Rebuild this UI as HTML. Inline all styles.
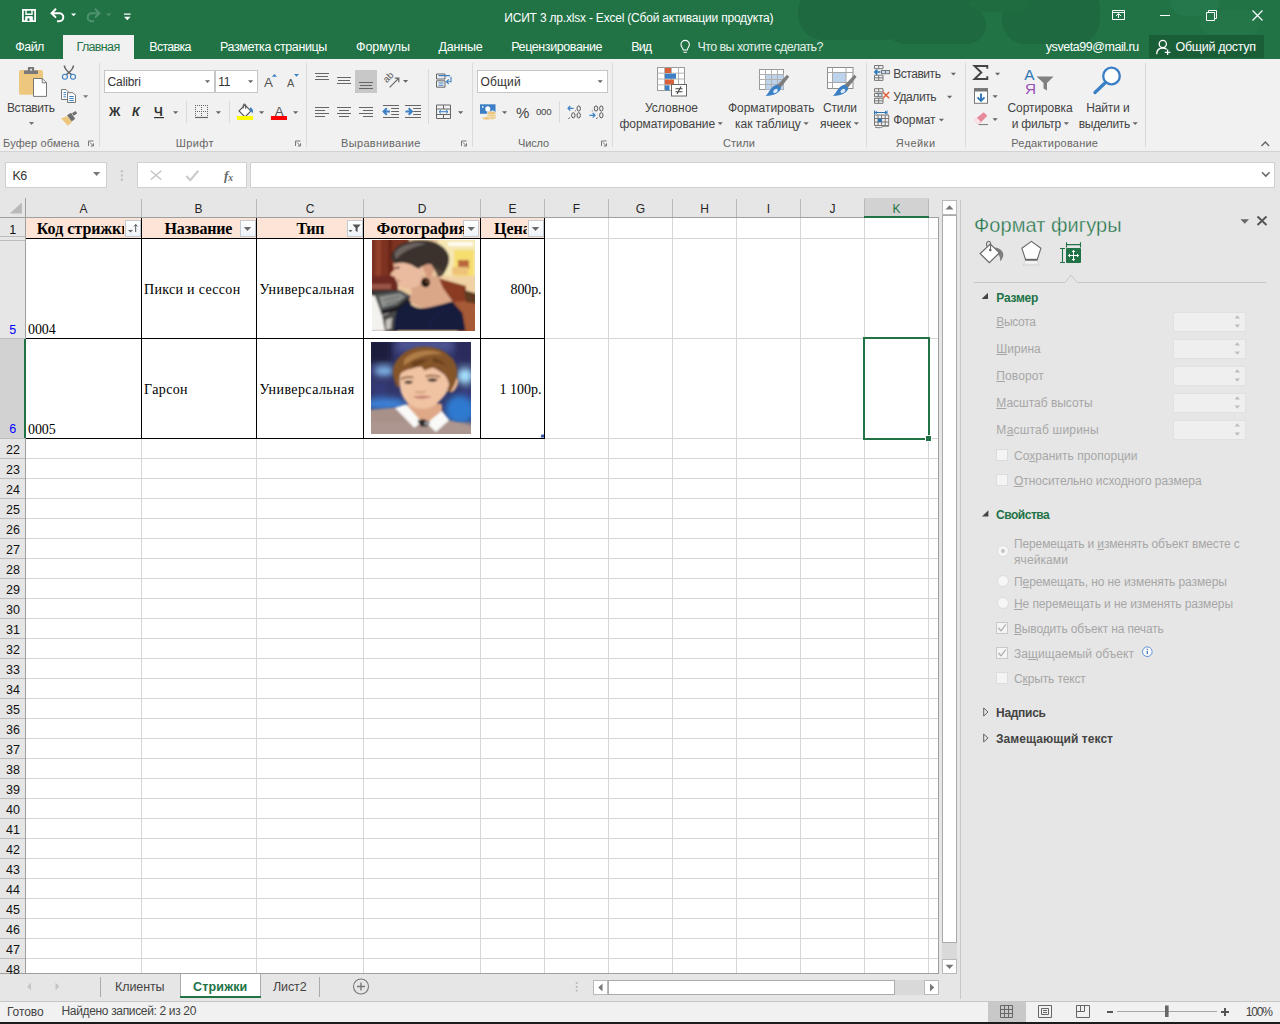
<!DOCTYPE html>
<html lang="ru"><head><meta charset="utf-8"><title>ИСИТ 3 лр.xlsx - Excel</title>
<style>
*{box-sizing:border-box;margin:0;padding:0}
html,body{width:1280px;height:1024px;overflow:hidden;background:#e6e6e6}
body{font-family:"Liberation Sans",sans-serif;font-size:12px;color:#444;position:relative}
.a{position:absolute}
.t{position:absolute;white-space:nowrap;line-height:normal}
.ov{position:absolute;left:0;top:0;pointer-events:none}
u{text-decoration-thickness:1px;text-underline-offset:1px}

</style></head><body>
<!-- title bar + tabs -->
<div class="a" style="left:0px;top:0px;width:1280px;height:59px;background:#217346;"></div>
<div class="a" style="left:790px;top:0;width:490px;height:59px;overflow:hidden"><div class="a" style="left:8px;top:-14px;width:112px;height:54px;border-radius:26px;background:#1e693f"></div><div class="a" style="left:96px;top:6px;width:100px;height:38px;border-radius:19px;background:#1e693f"></div><div class="a" style="left:60px;top:-20px;width:120px;height:40px;border-radius:19px;background:#1e693f"></div><div class="a" style="left:212px;top:-16px;width:98px;height:60px;border-radius:24px;background:#1e693f"></div><div class="a" style="left:180px;top:-20px;width:60px;height:32px;border-radius:12px;background:#1f6c41"></div><div class="a" style="left:380px;top:-14px;width:50px;height:30px;border-radius:15px;background:#25784b"></div><div class="a" style="left:410px;top:10px;width:60px;height:26px;border-radius:13px;background:#247649"></div></div>
<div class="a" style="left:63px;top:35px;width:71px;height:24px;background:#f1f1f1;"></div>
<div class="a" style="left:1149px;top:35px;width:115px;height:23px;background:#1a5e38;"></div>
<!-- ribbon -->
<div class="a" style="left:0px;top:59px;width:1280px;height:92px;background:#f1f1f1;"></div>
<div class="a" style="left:0px;top:151px;width:1280px;height:1px;background:#d2d2d2;"></div>
<div class="a" style="left:99px;top:63px;width:1px;height:84px;background:#dadada;"></div>
<div class="a" style="left:306px;top:63px;width:1px;height:84px;background:#dadada;"></div>
<div class="a" style="left:472px;top:63px;width:1px;height:84px;background:#dadada;"></div>
<div class="a" style="left:612px;top:63px;width:1px;height:84px;background:#dadada;"></div>
<div class="a" style="left:866px;top:63px;width:1px;height:84px;background:#dadada;"></div>
<div class="a" style="left:965px;top:63px;width:1px;height:84px;background:#dadada;"></div>
<div class="a" style="left:1145px;top:63px;width:1px;height:84px;background:#dadada;"></div>
<div class="a" style="left:186px;top:101px;width:1px;height:22px;background:#dadada;"></div>
<div class="a" style="left:229px;top:101px;width:1px;height:22px;background:#dadada;"></div>
<div class="a" style="left:428px;top:69px;width:1px;height:55px;background:#dadada;"></div>
<div class="a" style="left:559px;top:101px;width:1px;height:22px;background:#dadada;"></div>
<div class="a" style="left:104px;top:70px;width:111px;height:23px;background:#fff;border:1px solid #c6c6c6;"></div>
<div class="a" style="left:215px;top:70px;width:43px;height:23px;background:#fff;border:1px solid #c6c6c6;"></div>
<div class="a" style="left:477px;top:70px;width:131px;height:23px;background:#fff;border:1px solid #c6c6c6;"></div>
<div class="a" style="left:355px;top:70px;width:22px;height:23px;background:#c8c8c8;"></div>
<!-- formula bar -->
<div class="a" style="left:5px;top:162px;width:102px;height:26px;background:#fff;border:1px solid #d0d0d0;"></div>
<div class="a" style="left:137px;top:162px;width:110px;height:26px;background:#fff;border:1px solid #d0d0d0;"></div>
<div class="a" style="left:250px;top:162px;width:1025px;height:26px;background:#fff;border:1px solid #d0d0d0;"></div>
<!-- grid -->
<div class="a" style="left:26px;top:218px;width:913px;height:755px;background:#fff;"></div>
<div class="a" style="left:26px;top:218px;width:519px;height:20px;background:#fce4d6;"></div>
<div class="a" style="left:864px;top:198px;width:65px;height:19px;background:#d2d2d2;"></div>
<div class="a" style="left:0px;top:339px;width:25px;height:99px;background:#d2d2d2;"></div>
<div class="a" style="left:141px;top:218px;width:1px;height:755px;background:#d6d6d6;"></div>
<div class="a" style="left:141px;top:199px;width:1px;height:18px;background:#b9b9b9;"></div>
<div class="a" style="left:256px;top:218px;width:1px;height:755px;background:#d6d6d6;"></div>
<div class="a" style="left:256px;top:199px;width:1px;height:18px;background:#b9b9b9;"></div>
<div class="a" style="left:363px;top:218px;width:1px;height:755px;background:#d6d6d6;"></div>
<div class="a" style="left:363px;top:199px;width:1px;height:18px;background:#b9b9b9;"></div>
<div class="a" style="left:480px;top:218px;width:1px;height:755px;background:#d6d6d6;"></div>
<div class="a" style="left:480px;top:199px;width:1px;height:18px;background:#b9b9b9;"></div>
<div class="a" style="left:544px;top:218px;width:1px;height:755px;background:#d6d6d6;"></div>
<div class="a" style="left:544px;top:199px;width:1px;height:18px;background:#b9b9b9;"></div>
<div class="a" style="left:608px;top:218px;width:1px;height:755px;background:#d6d6d6;"></div>
<div class="a" style="left:608px;top:199px;width:1px;height:18px;background:#b9b9b9;"></div>
<div class="a" style="left:672px;top:218px;width:1px;height:755px;background:#d6d6d6;"></div>
<div class="a" style="left:672px;top:199px;width:1px;height:18px;background:#b9b9b9;"></div>
<div class="a" style="left:736px;top:218px;width:1px;height:755px;background:#d6d6d6;"></div>
<div class="a" style="left:736px;top:199px;width:1px;height:18px;background:#b9b9b9;"></div>
<div class="a" style="left:800px;top:218px;width:1px;height:755px;background:#d6d6d6;"></div>
<div class="a" style="left:800px;top:199px;width:1px;height:18px;background:#b9b9b9;"></div>
<div class="a" style="left:864px;top:218px;width:1px;height:755px;background:#d6d6d6;"></div>
<div class="a" style="left:864px;top:199px;width:1px;height:18px;background:#b9b9b9;"></div>
<div class="a" style="left:928px;top:218px;width:1px;height:755px;background:#d6d6d6;"></div>
<div class="a" style="left:928px;top:199px;width:1px;height:18px;background:#b9b9b9;"></div>
<div class="a" style="left:26px;top:238px;width:913px;height:1px;background:#d6d6d6;"></div>
<div class="a" style="left:26px;top:338px;width:913px;height:1px;background:#d6d6d6;"></div>
<div class="a" style="left:26px;top:438px;width:913px;height:1px;background:#d6d6d6;"></div>
<div class="a" style="left:26px;top:458px;width:913px;height:1px;background:#d6d6d6;"></div>
<div class="a" style="left:26px;top:478px;width:913px;height:1px;background:#d6d6d6;"></div>
<div class="a" style="left:26px;top:498px;width:913px;height:1px;background:#d6d6d6;"></div>
<div class="a" style="left:26px;top:518px;width:913px;height:1px;background:#d6d6d6;"></div>
<div class="a" style="left:26px;top:538px;width:913px;height:1px;background:#d6d6d6;"></div>
<div class="a" style="left:26px;top:558px;width:913px;height:1px;background:#d6d6d6;"></div>
<div class="a" style="left:26px;top:578px;width:913px;height:1px;background:#d6d6d6;"></div>
<div class="a" style="left:26px;top:598px;width:913px;height:1px;background:#d6d6d6;"></div>
<div class="a" style="left:26px;top:618px;width:913px;height:1px;background:#d6d6d6;"></div>
<div class="a" style="left:26px;top:638px;width:913px;height:1px;background:#d6d6d6;"></div>
<div class="a" style="left:26px;top:658px;width:913px;height:1px;background:#d6d6d6;"></div>
<div class="a" style="left:26px;top:678px;width:913px;height:1px;background:#d6d6d6;"></div>
<div class="a" style="left:26px;top:698px;width:913px;height:1px;background:#d6d6d6;"></div>
<div class="a" style="left:26px;top:718px;width:913px;height:1px;background:#d6d6d6;"></div>
<div class="a" style="left:26px;top:738px;width:913px;height:1px;background:#d6d6d6;"></div>
<div class="a" style="left:26px;top:758px;width:913px;height:1px;background:#d6d6d6;"></div>
<div class="a" style="left:26px;top:778px;width:913px;height:1px;background:#d6d6d6;"></div>
<div class="a" style="left:26px;top:798px;width:913px;height:1px;background:#d6d6d6;"></div>
<div class="a" style="left:26px;top:818px;width:913px;height:1px;background:#d6d6d6;"></div>
<div class="a" style="left:26px;top:838px;width:913px;height:1px;background:#d6d6d6;"></div>
<div class="a" style="left:26px;top:858px;width:913px;height:1px;background:#d6d6d6;"></div>
<div class="a" style="left:26px;top:878px;width:913px;height:1px;background:#d6d6d6;"></div>
<div class="a" style="left:26px;top:898px;width:913px;height:1px;background:#d6d6d6;"></div>
<div class="a" style="left:26px;top:918px;width:913px;height:1px;background:#d6d6d6;"></div>
<div class="a" style="left:26px;top:938px;width:913px;height:1px;background:#d6d6d6;"></div>
<div class="a" style="left:26px;top:958px;width:913px;height:1px;background:#d6d6d6;"></div>
<div class="a" style="left:0px;top:236px;width:25px;height:1px;background:#bdbdbd;"></div>
<div class="a" style="left:0px;top:240px;width:25px;height:1px;background:#bdbdbd;"></div>
<div class="a" style="left:0px;top:338px;width:25px;height:1px;background:#bdbdbd;"></div>
<div class="a" style="left:0px;top:438px;width:25px;height:1px;background:#bdbdbd;"></div>
<div class="a" style="left:0px;top:458px;width:25px;height:1px;background:#bdbdbd;"></div>
<div class="a" style="left:0px;top:478px;width:25px;height:1px;background:#bdbdbd;"></div>
<div class="a" style="left:0px;top:498px;width:25px;height:1px;background:#bdbdbd;"></div>
<div class="a" style="left:0px;top:518px;width:25px;height:1px;background:#bdbdbd;"></div>
<div class="a" style="left:0px;top:538px;width:25px;height:1px;background:#bdbdbd;"></div>
<div class="a" style="left:0px;top:558px;width:25px;height:1px;background:#bdbdbd;"></div>
<div class="a" style="left:0px;top:578px;width:25px;height:1px;background:#bdbdbd;"></div>
<div class="a" style="left:0px;top:598px;width:25px;height:1px;background:#bdbdbd;"></div>
<div class="a" style="left:0px;top:618px;width:25px;height:1px;background:#bdbdbd;"></div>
<div class="a" style="left:0px;top:638px;width:25px;height:1px;background:#bdbdbd;"></div>
<div class="a" style="left:0px;top:658px;width:25px;height:1px;background:#bdbdbd;"></div>
<div class="a" style="left:0px;top:678px;width:25px;height:1px;background:#bdbdbd;"></div>
<div class="a" style="left:0px;top:698px;width:25px;height:1px;background:#bdbdbd;"></div>
<div class="a" style="left:0px;top:718px;width:25px;height:1px;background:#bdbdbd;"></div>
<div class="a" style="left:0px;top:738px;width:25px;height:1px;background:#bdbdbd;"></div>
<div class="a" style="left:0px;top:758px;width:25px;height:1px;background:#bdbdbd;"></div>
<div class="a" style="left:0px;top:778px;width:25px;height:1px;background:#bdbdbd;"></div>
<div class="a" style="left:0px;top:798px;width:25px;height:1px;background:#bdbdbd;"></div>
<div class="a" style="left:0px;top:818px;width:25px;height:1px;background:#bdbdbd;"></div>
<div class="a" style="left:0px;top:838px;width:25px;height:1px;background:#bdbdbd;"></div>
<div class="a" style="left:0px;top:858px;width:25px;height:1px;background:#bdbdbd;"></div>
<div class="a" style="left:0px;top:878px;width:25px;height:1px;background:#bdbdbd;"></div>
<div class="a" style="left:0px;top:898px;width:25px;height:1px;background:#bdbdbd;"></div>
<div class="a" style="left:0px;top:918px;width:25px;height:1px;background:#bdbdbd;"></div>
<div class="a" style="left:0px;top:938px;width:25px;height:1px;background:#bdbdbd;"></div>
<div class="a" style="left:0px;top:958px;width:25px;height:1px;background:#bdbdbd;"></div>
<div class="a" style="left:0px;top:217px;width:939px;height:1px;background:#9f9f9f;"></div>
<div class="a" style="left:25px;top:198px;width:1px;height:775px;background:#9f9f9f;"></div>
<div class="a" style="left:938px;top:217px;width:1px;height:757px;background:#9f9f9f;"></div>
<div class="a" style="left:0px;top:973px;width:939px;height:1px;background:#9f9f9f;"></div>
<div class="a" style="left:26px;top:238px;width:519px;height:1px;background:#000;"></div>
<div class="a" style="left:26px;top:338px;width:519px;height:1px;background:#000;"></div>
<div class="a" style="left:26px;top:438px;width:519px;height:1px;background:#000;"></div>
<div class="a" style="left:141px;top:218px;width:1px;height:221px;background:#000;"></div>
<div class="a" style="left:256px;top:218px;width:1px;height:221px;background:#000;"></div>
<div class="a" style="left:363px;top:218px;width:1px;height:221px;background:#000;"></div>
<div class="a" style="left:480px;top:218px;width:1px;height:221px;background:#000;"></div>
<div class="a" style="left:544px;top:218px;width:1px;height:221px;background:#000;"></div>
<div class="a" style="left:864px;top:216px;width:65px;height:2px;background:#217346;"></div>
<div class="a" style="left:24px;top:339px;width:2px;height:99px;background:#217346;"></div>
<div class="a" style="left:863px;top:337px;width:67px;height:103px;border:1px solid #217346;border-width:2px;"></div>
<div class="a" style="left:925px;top:435px;width:7px;height:7px;background:#217346;border:1px solid #fff;"></div>
<div class="a" style="left:124.5px;top:220px;width:16px;height:16.5px;background:#f8fafc;border:1px solid #c3cad2;background:linear-gradient(#fff,#eef2f7);"></div>
<div class="a" style="left:239.5px;top:220px;width:16px;height:16.5px;background:#f8fafc;border:1px solid #c3cad2;background:linear-gradient(#fff,#eef2f7);"></div>
<div class="a" style="left:346.5px;top:220px;width:16px;height:16.5px;background:#f8fafc;border:1px solid #c3cad2;background:linear-gradient(#fff,#eef2f7);"></div>
<div class="a" style="left:463.2px;top:220px;width:16px;height:16.5px;background:#f8fafc;border:1px solid #c3cad2;background:linear-gradient(#fff,#eef2f7);"></div>
<div class="a" style="left:527.5px;top:220px;width:16px;height:16.5px;background:#f8fafc;border:1px solid #c3cad2;background:linear-gradient(#fff,#eef2f7);"></div>
<!-- scrollbars -->
<div class="a" style="left:942px;top:200px;width:15px;height:774px;background:#d9d9d9;"></div>
<div class="a" style="left:942px;top:200px;width:15px;height:15px;background:#fff;border:1px solid #b9b9b9;"></div>
<div class="a" style="left:942px;top:215px;width:15px;height:728px;background:#fff;border:1px solid #ababab;"></div>
<div class="a" style="left:942px;top:959px;width:15px;height:15px;background:#fff;border:1px solid #b9b9b9;"></div>
<div class="a" style="left:593px;top:980px;width:346px;height:15px;background:#d9d9d9;"></div>
<div class="a" style="left:593px;top:980px;width:15px;height:15px;background:#fff;border:1px solid #b9b9b9;"></div>
<div class="a" style="left:608px;top:980px;width:287px;height:15px;background:#fff;border:1px solid #ababab;"></div>
<div class="a" style="left:924px;top:980px;width:15px;height:15px;background:#fff;border:1px solid #b9b9b9;"></div>
<!-- sheet tabs -->
<div class="a" style="left:180px;top:974px;width:81px;height:23px;background:#fff;"></div>
<div class="a" style="left:180px;top:974px;width:1px;height:23px;background:#ababab;"></div>
<div class="a" style="left:260px;top:974px;width:1px;height:23px;background:#ababab;"></div>
<div class="a" style="left:180px;top:996px;width:81px;height:2px;background:#217346;"></div>
<div class="a" style="left:100px;top:977px;width:1px;height:20px;background:#ababab;"></div>
<div class="a" style="left:319px;top:977px;width:1px;height:20px;background:#ababab;"></div>
<!-- pane -->
<div class="a" style="left:960px;top:200px;width:1px;height:799px;background:#c8c8c8;"></div>
<div class="a" style="left:1173px;top:311.5px;width:73px;height:20px;background:#efefef;border:1px solid #e1e1e1;"></div>
<div class="a" style="left:1173px;top:338.5px;width:73px;height:20px;background:#efefef;border:1px solid #e1e1e1;"></div>
<div class="a" style="left:1173px;top:365.5px;width:73px;height:20px;background:#efefef;border:1px solid #e1e1e1;"></div>
<div class="a" style="left:1173px;top:392.5px;width:73px;height:20px;background:#efefef;border:1px solid #e1e1e1;"></div>
<div class="a" style="left:1173px;top:419.5px;width:73px;height:20px;background:#efefef;border:1px solid #e1e1e1;"></div>
<div class="a" style="left:996px;top:449px;width:12px;height:12px;background:#f4f4f4;border:1px solid #dcdcdc;"></div>
<div class="a" style="left:996px;top:474px;width:12px;height:12px;background:#f4f4f4;border:1px solid #dcdcdc;"></div>
<div class="a" style="left:996px;top:672px;width:12px;height:12px;background:#f4f4f4;border:1px solid #dcdcdc;"></div>
<div class="a" style="left:996px;top:622px;width:12px;height:12px;background:#f4f4f4;border:1px solid #c9c9c9;"></div>
<div class="a" style="left:996px;top:647px;width:12px;height:12px;background:#f4f4f4;border:1px solid #c9c9c9;"></div>
<div class="a" style="left:997px;top:545px;width:12px;height:12px;background:#f6f6f6;border:1px solid #dcdcdc;border-radius:50%;"></div>
<div class="a" style="left:997px;top:575px;width:12px;height:12px;background:#f6f6f6;border:1px solid #dcdcdc;border-radius:50%;"></div>
<div class="a" style="left:997px;top:597px;width:12px;height:12px;background:#f6f6f6;border:1px solid #dcdcdc;border-radius:50%;"></div>
<div class="a" style="left:1001px;top:549px;width:4px;height:4px;background:#c4c4c4;border-radius:50%;"></div>
<!-- status bar -->
<div class="a" style="left:0px;top:1001px;width:1280px;height:1px;background:#c6c6c6;"></div>
<div class="a" style="left:0px;top:1002px;width:1280px;height:20px;background:#f1f1f1;"></div>
<div class="a" style="left:988px;top:1002px;width:38px;height:20px;background:#c8c8c8;"></div>
<div class="a" style="left:0px;top:1022px;width:1280px;height:2px;background:#1c1c1c;"></div>
<svg class="a" style="left:372px;top:240px" width="103" height="91" viewBox="0 0 103 91">
<defs><filter id="b1" x="-10%" y="-10%" width="120%" height="120%"><feGaussianBlur stdDeviation="0.9"/></filter><clipPath id="c1"><rect width="103" height="91"/></clipPath></defs>
<g clip-path="url(#c1)"><g filter="url(#b1)">
<rect x="-3" y="-3" width="109" height="97" fill="#e9c9a0"/>
<rect x="-3" y="-3" width="40" height="42" fill="#7d3122"/><rect x="4" y="-3" width="5" height="42" fill="#93402a"/><rect x="16" y="-3" width="4" height="42" fill="#6a2619"/>
<rect x="66" y="-3" width="40" height="44" fill="#f6e7b4"/><rect x="82" y="10" width="20" height="27" fill="#f6df6e"/><rect x="76" y="2" width="25" height="4" fill="#fffdf2"/><rect x="86" y="20" width="11" height="9" fill="#b9683e"/><rect x="80" y="27" width="16" height="8" fill="#efc27a"/>
<path d="M66 36h40v26h-40z" fill="#f1d2a4"/>
<path d="M-3 36h24l5 5v10h-29z" fill="#6e2a21"/><path d="M-3 44h22v5h-25z" fill="#9a5446"/>
<path d="M66 38l28 8v32l-28-8z" fill="#8a3a20"/><path d="M82 62l24-2v34h-20z" fill="#a65a34"/><path d="M92 50l14 4v10l-12-2z" fill="#5e3a24"/>
<path d="M-3 50h30l12 6v8l-14 28h-28z" fill="#3a3433"/>
<path d="M-3 55l6 1l5.500 15l13.500 4l2 16h-27z" fill="#f4f2ee"/>
<path d="M3 54l26-3.500l9 5.500l-12 10l-17.500 5z" fill="#4d5152"/><path d="M7 56.500l21-3.200l5 3.200l-9 7l-14 4z" fill="#8e918d"/><path d="M12 60l16-3.500M14 64l12-3.500" stroke="#5a5d5c" stroke-width="1.200" fill="none"/>
<path d="M8.500 71l17.500-5l12-10v3.500l-11 10.500l-17.500 5z" fill="#1e1e21"/>
<path d="M10 75.500l17-5l-3 20.500h-11z" fill="#4a4949"/><path d="M13.500 80l6.500-2.500l-1 11l-5 1.500z" fill="#c4c0ba"/>
<path d="M66 36l5 12l10 14l-22 9l-16-6l-6-5l3-8l-3-8l8-8z" fill="#dba789"/>
<path d="M21.800 22c-1 3 1 5 1 7c-1 2-4.300 4-4.300 5.500c0 1.500 3 1.500 4.400 2.500c.5 2 1 3 2 4c-.5 2 1.500 4 4 5.300c3 1.500 6 2.500 8.300 2c4-.5 7-1.500 8.200-2c3-2 4-5 4.200-8l4-14l-20-6z" fill="#ebbb9f"/>
<path d="M24 27.500l4-.8M25.500 41l3-.3" stroke="#a56a55" stroke-width="1" fill="none"/>
<path d="M50.500 25.800c3-3 9-3 11.300 0c0 5-1 10-4.100 12.200c-3-.5-5.500-4-7.200-12.200z" fill="#d69c80"/>
<path d="M18.800 18.600c.5-3 1.500-6 3-8.200c3-4 6-6 10.200-7.200c6-2.500 12-3.500 17.500-3.100c6 .2 11 1 15.400 3.100c4 2 7 4 9.200 7.200c2 3 3 5 3.100 8.200c0 3-.5 6-2.100 9.200c-1.500 3-3 6-5.100 8.200l-4.100 1c-1-3-2.500-6-4.100-8.200l-2-4.100c-2-1-4-1-6.200 0c-1.500.5-3 1.200-4.100 2.100l-3.100 2c-2.500-1.500-5-3-7.100-4.100c-3-1-5.500-1.700-8.300-2c-3-.2-5.500 0-8.100 1c-1.200-.8-2-2-2.100-3.100z" fill="#3b312e"/>
<path d="M22.500 13c3-5 10-8.500 18-9.800c5-.8 10-.5 14 .5c-6 1-12 3-18 6c-5 2.500-9 5.500-12.500 9.500c-1-2-1.500-4-1.500-6.200z" fill="#6d645f"/>
<path d="M60 25c3 3 5 7 6 12c2-1 4-3 5-5z" fill="#55443c"/>
<ellipse cx="53.600" cy="42.500" rx="4.400" ry="4.800" fill="#15100f"/><ellipse cx="54.800" cy="41.600" rx="1.300" ry="2" fill="#7d4e34"/><ellipse cx="25.200" cy="28" rx="2" ry=".900" fill="#4a332c"/>
<path d="M36.200 61.600c2 3 5 5 9.200 6.200c5 .8 10 .2 14.400-1c7-1.500 14-3.500 20.500-5.200l10.200 11.300l3.100 18.100h-71.800c.3-6 1-12 2.100-18.100c1.500-3 3-4.500 5.100-6.100c2-2 4.500-3.500 7.200-5.200z" fill="#181b3b"/><path d="M56 91c2-9 8-17 16-22" stroke="#23285a" stroke-width="1" fill="none"/>
</g></g></svg>
<svg class="a" style="left:371px;top:342px" width="100" height="92" viewBox="0 0 100 92">
<defs><filter id="b2" x="-10%" y="-10%" width="120%" height="120%"><feGaussianBlur stdDeviation="0.8"/></filter><filter id="b3" x="-30%" y="-30%" width="160%" height="160%"><feGaussianBlur stdDeviation="3"/></filter><clipPath id="c2"><rect width="100" height="92"/></clipPath></defs>
<g clip-path="url(#c2)">
<rect width="100" height="92" fill="#33366a"/>
<g filter="url(#b3)"><rect x="-5" y="-5" width="26" height="26" fill="#1b1b3e"/><rect x="26" y="-4" width="56" height="14" fill="#4c5290"/><rect x="84" y="-4" width="20" height="24" fill="#2a2b5c"/><ellipse cx="13" cy="29" rx="10" ry="4.500" fill="#86bdf0"/><ellipse cx="8" cy="47" rx="7" ry="6" fill="#343a7a"/><ellipse cx="14" cy="62" rx="22" ry="6.500" fill="#3c80d6"/><ellipse cx="94" cy="34" rx="8" ry="8" fill="#a4e0fb"/><ellipse cx="89" cy="68" rx="15" ry="15" fill="#2e7ad0"/><ellipse cx="96" cy="51" rx="5" ry="6" fill="#393e84"/></g>
<g filter="url(#b2)">
<path d="M-3 68l27-2.200l30 12l24 .300l25 6.500v12h-106z" fill="#a9918a"/><path d="M-3 80h106v14h-106z" fill="#b09a92" opacity=".6"/>
<path d="M37 58l34 4v8l-14 14h-8l-13-16z" fill="#dfa988"/>
<path d="M28.500 41.200c-.500-5 0-9 1.500-12.300c4-3 8-4 10.300-4.100c4-1.500 7-2 10.200-2.100c4 .5 8 1.500 12.300 3.100c4 2 8 4.500 11.300 7.200c2 3 3.500 6 4.100 9.200c-.3 2.500-1 5-2.100 7.200c-1.300 2.500-3 5-5.100 7.200c-2.500 2.800-5 5-8.200 7.100c-3 1.800-6.500 2.800-10.200 3.100c-3-.1-5.600-.4-8.200-1c-3.500-1.500-6.500-3.500-9.300-6.200c-2-2.800-3.800-5.800-5.100-9.200c-.8-3-1.300-6-1.500-9.200z" fill="#f0c3a3"/>
<path d="M81.300 37.100c2-1.500 4.500-1.500 6.100 0c.3 4-1.500 9-5 12.500l-3.200.8z" fill="#e5b391"/>
<path d="M26.900 46.300c-2-3.500-3.800-7.500-4.600-12.300c-.5-3.500-.3-7 .5-10.200c1.500-4 4-7.500 7.200-10.300c3.500-3 7.500-5.500 12.300-7.200c4-1.200 8.500-1.700 13.300-1.500c5.500.5 10.500 1.700 15.400 3.600c4 2.200 7.500 5 10.300 8.200c2.300 3 3.800 6.500 4.600 10.200c.3 3.500.1 7-.5 10.300c-1.500 4.700-3.500 9-6.200 13.300l-3.100-1c1-2.500 1.700-5 2.100-7.200c-.6-3.200-2.100-6.200-4.100-9.200c-3.300-2.700-7.300-5.200-11.300-7.200c-3.300.3-6.300 1.300-9.300 2.600c-1-1.300-2-2.600-3-3.600c-3.200.1-6.200.6-10.200 2.100c-2.300.1-6.300 1.100-10.300 4.100c-1.500 3.300-2 7.300-1.500 12.300z" fill="#85552b"/>
<path d="M33 18c5-6 14-9.500 24-9.500c6 0 11 1.500 15 4c-6-1-12-.5-18 1c-8 2-15 5.500-21 10z" fill="#b07e46"/><path d="M40 21c5-2.500 11-4 17-3.500c-4 3-9 5.500-15 7.500zM62 16c6 1 11 4 14 8c-4-2-9-3.500-14-4z" fill="#68401e"/>
<path d="M33 40.200c3-1.800 6.500-1.800 9.300-.2c-2.800 2.300-6.500 2.300-9.300.2zM56 38c3.300-1.900 7.700-1.900 11 0c-3.300 2.300-7.700 2.300-11 0z" fill="#30221c"/><path d="M30 37c4-2 8.500-2.300 12.300-1.500M54.600 34.500c4.500-1.500 9.500-1.300 14.400.5" stroke="#76492a" stroke-width="1.400" fill="none"/>
<path d="M41.300 54.800c6-1.300 13-1.300 19.500-.3c-6 2.800-13.500 2.800-19.500.3z" fill="#c47e72"/><path d="M44.400 49.400c3 1.300 7 1.300 10.200 0" stroke="#cc9678" stroke-width="1.600" fill="none"/>
<path d="M23.900 65.800l11.200-3.600l15.400 17.900l-7.200 5.700z" fill="#f9f9f7"/><path d="M71 68.900l7.200 9.200l-13.300 11.800l-9.300-8.700z" fill="#f9f9f7"/>
<path d="M46.400 78.500l6-1.500l6.300 3l-2 4.500l-7 0z" fill="#29292b"/><circle cx="55.500" cy="81.200" r="2" fill="#a0a0a0"/>
</g></g></svg>

<svg class="ov" width="1280" height="1024" viewBox="0 0 1280 1024">
<!-- quick access toolbar -->
<g fill="none" stroke="#fff" stroke-width="1.5">
<path d="M22.900 9.900h12.200v11.300h-12.200z" stroke-width="1.800"/><path d="M26 10v4.200h6V10" stroke-width="1.400"/><path d="M25.700 21v-4.300h6.600V21z" fill="#fff" stroke-width="1"/><path d="M27.500 18.300v2.700h2v-2.700z" fill="#217346" stroke="none"/>
<path d="M56 8.8L51.6 13.2L56 17.6M52 13.2h7.3a4 4 0 0 1 0 8H57" stroke-width="2"/>
<path d="M95 8.8l4.4 4.4L95 17.6M99 13.2h-7.3a4 4 0 0 0 0 8H94" stroke="#4f9270" stroke-width="2"/>
</g>
<path transform="translate(71 13.4)" d="M0 0h5.2l-2.6 2.8z" fill="#fff"/><path transform="translate(106 13.4)" d="M0 0h5.2l-2.6 2.8z" fill="#4f9270"/>
<path d="M124 13.4h6.6v1.3H124zM124 16.8h6.6l-3.3 3.5z" fill="#fff"/>
<!-- window buttons -->
<g fill="none" stroke="#fff" stroke-width="1">
<path d="M1112.5 10.5h12v9h-12zM1112.5 12.5h12M1118.5 18v-4M1116 16l2.5-2.5l2.5 2.5"/>
<path d="M1160 15.5h10"/>
<path d="M1206.5 12.5h8v8h-8zM1208.5 12.5v-2h8v8h-2"/>
<path d="M1252.5 10.5l10 10M1262.5 10.5l-10 10" stroke-width="1.2"/>
<!-- bulb -->
<path d="M683.2 50c0-2-2.2-2.700-2.200-5.400a4.200 4.200 0 0 1 8.400 0c0 2.700-2.200 3.400-2.200 5.400zM683.500 52.300h3.400" stroke-width="1.100"/>
<!-- share person -->
<circle cx="1162.800" cy="44" r="3.600" stroke-width="1.300"/><path d="M1156.700 54.300c0-4 2.600-6.300 6.100-6.300c1.500 0 2.800.4 3.800 1.200M1167.600 49.500v5.600M1164.800 52.300h5.600" stroke-width="1.300"/>
</g>
<!-- ribbon: clipboard group -->
<rect x="19" y="70" width="24" height="24.800" rx="1.800" fill="#eec77e"/>
<path d="M24 70.500h14v3.600H24zM27.900 67h6.200v3.600h-6.200z" fill="#797979"/><circle cx="31" cy="69.800" r="1" fill="#f1f1f1"/>
<path d="M33.500 78.500h8.800l4.200 4.200v13.700h-13z" fill="#fff" stroke="#777" stroke-width="1"/><path d="M42.200 78.500v4.300h4.300" fill="none" stroke="#777" stroke-width="1"/>
<path transform="translate(28.900 122.100)" d="M0 0h5.2l-2.6 2.8z" fill="#777"/>
<path d="M64.300 65.500c.5 4 3.500 6.500 7.300 9.200M73.500 65.500c-.5 4-3.500 6.500-7.300 9.200" fill="none" stroke="#666" stroke-width="1.600"/>
<circle cx="64.900" cy="76.800" r="2.500" fill="none" stroke="#3b7fc4" stroke-width="1.100"/><circle cx="73" cy="76.800" r="2.500" fill="none" stroke="#3b7fc4" stroke-width="1.100"/>
<path d="M61.500 89.500h4.500l2 2v8h-6.500z" fill="#fff" stroke="#777"/><path d="M67.500 92.700h5.500l2.500 2.500v7.300h-8z" fill="#fff" stroke="#777"/>
<path d="M63.500 92.500h2.500M63.500 94.700h2.500M63.500 96.900h2.500M69.300 96.500h4.500M69.300 98.600h4.500M69.300 100.600h4.500" stroke="#3b7fc4" stroke-width="1"/>
<path transform="translate(83 95.300)" d="M0 0h5.2l-2.6 2.8z" fill="#777"/>
<path d="M61 118.500l6-2.500l5 6l-4 3.800z" fill="#eec77e"/><path d="M67 115.300l4-2.600l4.200 6l-3.500 2.800z" fill="#6e6e6e"/><path d="M72 113.300l3.500-2.300l1.700 2.200l-3.400 2.600z" fill="#6e6e6e"/>
<path transform="translate(88.500 140.500)" d="M0 5.5V0.5H5M5 5.5L1.5 2M5 5.5V2.8M5 5.5H2.3" fill="none" stroke="#777" stroke-width="1"/><path transform="translate(295.500 140.500)" d="M0 5.5V0.5H5M5 5.5L1.5 2M5 5.5V2.8M5 5.5H2.3" fill="none" stroke="#777" stroke-width="1"/><path transform="translate(461.500 140.500)" d="M0 5.5V0.5H5M5 5.5L1.5 2M5 5.5V2.8M5 5.5H2.3" fill="none" stroke="#777" stroke-width="1"/><path transform="translate(601.500 140.500)" d="M0 5.5V0.5H5M5 5.5L1.5 2M5 5.5V2.8M5 5.5H2.3" fill="none" stroke="#777" stroke-width="1"/>
<!-- font group -->
<path transform="translate(204.900 80.200)" d="M0 0h5.2l-2.6 2.8z" fill="#666"/><path transform="translate(248 80.200)" d="M0 0h5.2l-2.6 2.8z" fill="#666"/>
<path d="M271.900 76.800h5.100l-2.550-2.800z" fill="#3b7fc4"/><path d="M294 74h5l-2.500 2.800z" fill="#3b7fc4"/>
<path d="M154 117.600h10" stroke="#333" stroke-width="1.200"/>
<path transform="translate(173 111.300)" d="M0 0h5.2l-2.6 2.8z" fill="#666"/><path transform="translate(215.800 111.300)" d="M0 0h5.2l-2.6 2.8z" fill="#666"/><path transform="translate(259 111.300)" d="M0 0h5.2l-2.6 2.8z" fill="#666"/><path transform="translate(293 111.300)" d="M0 0h5.2l-2.6 2.8z" fill="#666"/>
<path d="M195 105.500h13M195 111.500h13M195.500 105v12M201.500 105v12M207.500 105v12" fill="none" stroke="#666" stroke-width="1" stroke-dasharray="1 1"/>
<path d="M195 117.500h13" stroke="#666" stroke-width="1.200"/>
<path d="M244.800 105l6.200 6l-6 6l-6-6z" fill="#fff" stroke="#555" stroke-width="1.100"/><path d="M243.200 108.500v-3.300a1.200 1.200 0 0 1 2.400 0v3.500" fill="none" stroke="#555" stroke-width="1"/>
<path d="M250.300 107.300c2.500 1 3.300 3.500 2.300 6.200c-.8-1.600-1.700-2.600-3.100-3.500z" fill="#3b7fc4"/>
<rect x="236.900" y="116" width="16.200" height="4" fill="#ffff00"/><rect x="270.900" y="116" width="16.100" height="4" fill="#ff0000"/>
<!-- alignment group -->
<g stroke="#666" stroke-width="1" fill="none">
<path d="M315 73.500h14M316 76.500h12M315 79.500h14M337 77.500h14M338 80.500h12M337 83.500h14M359 82.500h14M360 85.500h12M359 88.500h14"/>
<path d="M315 107.500h14M315 110.500h10M315 113.500h14M315 116.500h10M337 107.500h14M339 110.500h10M337 113.500h14M339 116.500h10M359 107.500h14M363 110.500h10M359 113.500h14M363 116.500h10"/>
<path d="M383 105.500h16M391.200 108.500h7.800M391.200 111.500h7.800M391.200 114.500h7.800M383 117.500h16M405 105.500h16M413.200 108.500h7.800M413.200 111.500h7.800M413.200 114.500h7.800M405 117.500h16"/>
<path d="M389.600 87.400l9-9M394.800 78.200h4v4" stroke-width="1.200"/>
<path d="M436.500 74h8.500v5h-8.500zM436.500 80.800h8.500v6.400h-8.500z"/>
<path d="M436.500 105h14v13.500h-14zM436.500 109h14M436.500 114.500h14M443.500 105v4M443.500 114.500v4"/>
</g>
<text transform="translate(386.800 83.300) rotate(-45)" font-family="Liberation Sans,sans-serif" font-size="9.500" fill="#555">ab</text>
<path transform="translate(403 80)" d="M0 0h5.2l-2.6 2.8z" fill="#666"/><path transform="translate(458 111.300)" d="M0 0h5.2l-2.6 2.8z" fill="#666"/>
<g stroke="#3b7fc4" stroke-width="2" fill="none">
<path d="M384 111.500h6M386.800 108.300l-3.200 3.200l3.200 3.200M405.500 111.500h6M408.700 108.300l3.200 3.200l-3.200 3.200"/>
<path d="M451 76.800v5h-4M448.800 79.500l-2.400 2.300l2.400 2.300M438.500 75.600h11.500M438.500 83h5M438.500 85.200h5" stroke-width="1.100"/>
<path d="M439 111.700h9M441 109.900l-2 1.800l2 1.800M446 109.900l2 1.800l-2 1.800" stroke-width="1"/>
</g>
<!-- number group -->
<path transform="translate(597.600 80.200)" d="M0 0h5.2l-2.6 2.8z" fill="#666"/><path transform="translate(502 111.300)" d="M0 0h5.2l-2.6 2.8z" fill="#666"/>
<rect x="480" y="104.300" width="15.500" height="9.500" fill="#3b7fc4"/><ellipse cx="487.800" cy="109" rx="2.500" ry="2.800" fill="#fff"/><rect x="482" y="106.200" width="1.500" height="1.500" fill="#fff"/><rect x="492" y="110.500" width="1.500" height="1.500" fill="#fff"/>
<g fill="#eec77e" stroke="#f1f1f1" stroke-width=".6"><ellipse cx="491.500" cy="117.500" rx="4.500" ry="1.900"/><ellipse cx="491.500" cy="115.300" rx="4.500" ry="1.900"/><ellipse cx="491.500" cy="113.100" rx="4.500" ry="1.900"/><ellipse cx="486.500" cy="118.300" rx="4" ry="1.700"/></g>
<g fill="none" stroke="#555" stroke-width="1"><ellipse cx="578.700" cy="108.500" rx="1.700" ry="2.600"/><ellipse cx="573.300" cy="115.300" rx="1.700" ry="2.600"/><ellipse cx="578.700" cy="115.300" rx="1.700" ry="2.600"/>
<ellipse cx="596" cy="108.500" rx="1.700" ry="2.600"/><ellipse cx="601.300" cy="108.500" rx="1.700" ry="2.600"/><ellipse cx="601.300" cy="115.300" rx="1.700" ry="2.600"/>
<path d="M575.500 110.500v.8M569.500 117.500l-.8 1.500M592.300 110.500v.8M597.300 117.500l-.8 1.500"/></g>
<g stroke="#3b7fc4" stroke-width="1.200" fill="none"><path d="M568 108.300h5.500M570.300 106l-2.300 2.300l2.300 2.300M589.500 115.300h5.500M592.700 113l2.300 2.300l-2.300 2.300"/></g>
<!-- styles group -->
<path transform="translate(717.600 122.300)" d="M0 0h5.2l-2.6 2.8z" fill="#666"/><path transform="translate(803.500 122.300)" d="M0 0h5.2l-2.6 2.8z" fill="#666"/><path transform="translate(853.800 122.300)" d="M0 0h5.2l-2.6 2.8z" fill="#666"/>
<g>
<rect x="657.500" y="67.500" width="27" height="23" fill="#fff" stroke="#9a9a9a"/><path d="M664.500 67.500v23M671.500 67.500v23M678.500 67.500v23M657.500 73.200h27M657.500 79h27M657.500 84.800h27" stroke="#b5b5b5" fill="none"/>
<rect x="665" y="68" width="6" height="5" fill="#d9603a"/><rect x="665" y="73.700" width="11" height="5" fill="#3b7fc4"/><rect x="665" y="79.500" width="9" height="5" fill="#d9603a"/><rect x="665" y="85.300" width="4.500" height="5" fill="#3b7fc4"/>
<rect x="671.500" y="84.500" width="15" height="11.500" fill="#fff" stroke="#666"/><path d="M675.500 88.700h7M675.500 91.700h7M681 86.500l-4 7.500" stroke="#444" stroke-width="1.100" fill="none"/>
</g>
<g>
<rect x="759.500" y="69.500" width="24" height="20" fill="#fff" stroke="#9a9a9a"/><rect x="765.500" y="74.500" width="18" height="15" fill="#bdd3ec"/><path d="M765.500 69.500v20M771.500 69.500v20M777.500 69.500v20M759.500 74.500h24M759.500 79.500h24M759.500 84.500h24" stroke="#b0b0b0" fill="none"/>
<path d="M789.2 76.800l-8.800 11.200l-3.400-2.800l10-10.400z" fill="#7d7d7d"/><path d="M777.300 84.600l3.600 3.200c-.5 4.500-6 8-15.500 8.200c3.500-2 4.500-9.500 11.900-11.400z" fill="#3b7fc4"/><ellipse cx="775.5" cy="91" rx="2.600" ry="1.700" transform="rotate(-35 775.5 91)" fill="#dbe8f6"/>
</g>
<g>
<rect x="827.5" y="67.500" width="25.500" height="21" fill="#fff" stroke="#8e8e8e"/><rect x="832.5" y="72.500" width="13.500" height="10" fill="#bdd3ec"/><path d="M832.5 67.500v21M846 67.500v21M827.5 72.500h25.500M827.5 82.500h25.500" stroke="#a8a8a8" fill="none"/>
<path d="M856.600 76.800l-8.800 11.200l-3.400-2.800l10-10.400z" fill="#7d7d7d"/><path d="M844.700 84.600l3.600 3.200c-.5 4.500-6 8-15.500 8.200c3.500-2 4.500-9.500 11.900-11.400z" fill="#3b7fc4"/><ellipse cx="842.900" cy="91" rx="2.600" ry="1.700" transform="rotate(-35 842.900 91)" fill="#dbe8f6"/>
</g>
<!-- cells group -->
<path transform="translate(950.800 72.800)" d="M0 0h5.2l-2.6 2.8z" fill="#666"/><path transform="translate(947 95.800)" d="M0 0h5.2l-2.6 2.8z" fill="#666"/><path transform="translate(938.800 118.800)" d="M0 0h5.2l-2.6 2.8z" fill="#666"/>
<g fill="none" stroke="#777" stroke-width="1">
<path d="M874.5 65.5h8.5v3.2h-8.5zM878.7 65.5v3.2M874.5 75.2h8.5v5.2h-8.5zM878.7 75.2v5.2M874.5 77.8h8.5"/>
<rect x="881.5" y="70.5" width="8" height="3.2" fill="#c5dcf2"/><path d="M885.5 70.5v3.2"/>
<path d="M874.5 88.7h8.5v3.2h-8.5zM878.7 88.7v3.2M874.5 98.3h8.5v5h-8.5zM878.7 98.3v5M874.5 100.800h8.5M874.5 93.5h3.800v3.2h-3.800z"/>
<rect x="878.3" y="93.5" width="3.7" height="3.2" fill="#c5dcf2"/>
<path d="M874.5 115h14.2v10.5h-14.2zM874.5 118.5h14.2M874.5 122h14.2M878 115v10.5M881.6 115v10.5M885.2 115v10.5M875 127c3 1 5 1 7 0s4-1 6.700-.5"/>
</g>
<rect x="878" y="118.5" width="3.6" height="3.5" fill="#2e75b6"/>
<path d="M875 72.100h5.5M877.3 69.600l-2.5 2.5l2.5 2.5" stroke="#2e75b6" stroke-width="1.5" fill="none"/>
<path d="M882.800 92l6.400 6.300M889.2 92l-6.400 6.300" stroke="#e0603c" stroke-width="1.5" fill="none"/>
<path d="M874.800 112.500h12M874.5 110.500v4M887 110.500v4M876.800 111l-1.500 1.500l1.500 1.500M885 111l1.500 1.500l-1.500 1.500" stroke="#2e75b6" stroke-width="1" fill="none"/>
<!-- editing group -->
<path d="M987.3 68.700v-2.700h-12.800l6.800 6.500l-6.800 6.500h12.800v-2.700" fill="none" stroke="#444" stroke-width="1.900"/>
<path transform="translate(995 72.800)" d="M0 0h5.2l-2.6 2.8z" fill="#666"/><path transform="translate(992.500 95.300)" d="M0 0h5.2l-2.6 2.8z" fill="#666"/><path transform="translate(992.500 118.300)" d="M0 0h5.2l-2.6 2.8z" fill="#666"/>
<rect x="974.5" y="88.700" width="13" height="14.600" fill="#fff" stroke="#777"/><rect x="974" y="88.200" width="14" height="3.300" fill="#777"/><path d="M981 93.500v7M977.500 97.300l3.500 3.500l3.500-3.500" stroke="#2e75b6" stroke-width="1.900" fill="none"/>
<path d="M974.300 120l9.300-7.700l3.800 3.500l-8.700 8.700z" fill="#e8899b"/><path d="M974.300 120l2.600-2.200l4 4l-2.200 2.700z" fill="#fbe3e8"/><path d="M978.700 124.600h9.300" stroke="#777" stroke-width="1"/>
<path d="M1036.500 76.500h17l-6.500 6.500v7.500l-3.500-2v-5.500z" fill="#808080"/>
<path transform="translate(1063.800 122.300)" d="M0 0h5.2l-2.6 2.8z" fill="#666"/><path transform="translate(1132.600 122.300)" d="M0 0h5.2l-2.6 2.8z" fill="#666"/>
<circle cx="1111.500" cy="76" r="8.300" fill="#fff" stroke="#3b7fc4" stroke-width="2.300"/><path d="M1105.500 82.500l-10.500 10" stroke="#3b7fc4" stroke-width="3.300" stroke-linecap="round"/>
<path d="M1261.500 146l3.800-4l3.800 4" fill="none" stroke="#666" stroke-width="1.400"/>
<!-- formula bar -->
<path d="M93 172h7.200l-3.600 4z" fill="#777"/>
<path d="M120.800 170.200h2v2h-2zM120.800 174.500h2v2h-2zM120.800 178.700h2v2h-2z" fill="#bdbdbd"/>
<path d="M150.800 170.800l10.500 9M161.300 170.800l-10.500 9" stroke="#c3c3c3" stroke-width="1.400" fill="none"/>
<path d="M186.300 176l4 4.200l8-9.500" stroke="#cbcbcb" stroke-width="2.200" fill="none"/>
<path d="M1262 172.300l3.800 3.800l3.800-3.800" stroke="#666" stroke-width="1.500" fill="none"/>
<!-- grid corner + filter buttons -->
<path d="M21.900 202.600v11h-12.100z" fill="#b9b9b9"/>
<path d="M128 230h5l-2.500 2.600z" fill="#666"/><path d="M135.700 232v-7.500M134 226.500l1.700-2l1.700 2" stroke="#555" stroke-width="1" fill="none"/>
<path d="M243.800 227h7.400l-3.700 4z" fill="#6b6b6b"/><path d="M467.500 227h7.400l-3.700 4z" fill="#6b6b6b"/><path d="M531.800 227h7.400l-3.700 4z" fill="#6b6b6b"/>
<path d="M348.500 230h4l-2 2.300z" fill="#666"/><path d="M352.500 224.500h8.200l-3.100 3.500v4l-2-1v-3z" fill="#555"/>
<path d="M541.500 434.500l2.500-0v3h-3.500z" fill="#3a55a5"/>
<!-- scrollbar arrows -->
<path d="M945.500 209.500h8l-4-4.200z" fill="#777"/><path d="M945.500 964.800h8l-4 4.200z" fill="#777"/>
<path d="M602.500 983.500v8l-4.200-4z" fill="#777"/><path d="M930 983.500v8l4.200-4z" fill="#777"/>
<!-- sheet nav -->
<path d="M31 982.500v8l-3.800-4z" fill="#c6c6c6"/><path d="M55.500 982.500v8l3.800-4z" fill="#c6c6c6"/>
<circle cx="361" cy="986.500" r="7.500" fill="none" stroke="#777" stroke-width="1.100"/><path d="M357 986.500h8M361 982.500v8" stroke="#777" stroke-width="1.400"/>
<path d="M575.800 982.300h1.700v1.700h-1.700zM575.800 986h1.700v1.700h-1.700zM575.800 989.700h1.700v1.700h-1.700z" fill="#b5b5b5"/>
<!-- status bar icons -->
<g fill="none" stroke="#666" stroke-width="1">
<path d="M1000.500 1005.500h12v12h-12zM1004.500 1005.500v12M1008.500 1005.500v12M1000.500 1009.500h12M1000.500 1013.500h12"/>
<path d="M1038.500 1005.500h13v12h-13zM1041.500 1008.500h7v6h-7zM1043 1010.500h4M1043 1012.500h4"/>
<path d="M1076.500 1005.500h13v12h-13zM1080.500 1005.500v6M1084.500 1005.500v6M1076.500 1011.500h8"/>
</g>
<path d="M1107 1012h6" stroke="#555" stroke-width="2"/><path d="M1117 1011.500h100" stroke="#a6a6a6" stroke-width="1"/><rect x="1165" y="1005.500" width="3.600" height="11.500" fill="#666"/>
<path d="M1221 1012h8M1225 1008v8" stroke="#555" stroke-width="2"/>
<!-- pane icons -->
<path d="M1240.500 219.300h8.500l-4.250 4.400z" fill="#666"/><path d="M1257.500 216.500l9 8.500M1266.500 216.500l-9 8.500" stroke="#555" stroke-width="1.900" fill="none"/>
<path d="M995 247.500c4.500.5 8 3 8.300 7c.2 2.500-1.500 4.500-3 7c0-4-1-6.500-3.500-9z" fill="#7f7f7f"/>
<path d="M990.300 244.100l9.200 8.700l-10.200 9.800l-9.100-9z" fill="#fff" stroke="#666" stroke-width="1.200"/>
<path d="M987 246.500c-1.200-3 0-5.200 1.800-5.200c2.200 0 2 3 1.600 8.500" fill="none" stroke="#666" stroke-width="1.100"/><circle cx="990.300" cy="250" r="1.300" fill="#666"/>
<defs><linearGradient id="pg" x1="0" y1="0" x2="0" y2="1"><stop offset="0" stop-color="#fff"/><stop offset="1" stop-color="#fff" stop-opacity="0"/></linearGradient></defs>
<path d="M1025.200 260.800h12l1.800 4.200h-15.600z" fill="url(#pg)" stroke="#bdbdbd" stroke-width=".5"/>
<path d="M1031.400 241.400l9.500 6.900l-3.700 11.400h-11.600l-3.700-11.400z" fill="#fff" stroke="#666" stroke-width="1.100"/><path d="M1025.400 259.700h11.800" stroke="#666" stroke-width="1.800"/>
<rect x="1066" y="248" width="15" height="15" rx="1" fill="#217346"/>
<path d="M1066 244.600h15M1066.500 242.300v5.200M1080.500 242.300v5.200M1062.500 248.500v14M1060 248.500h5M1060 262.500h5" stroke="#217346" stroke-width="1.100" fill="none"/>
<path d="M1068.500 255.500h10M1073.500 250.500v10M1070 254l-1.600 1.500l1.600 1.500M1077 254l1.600 1.500l-1.600 1.500M1072 252l1.500-1.600l1.500 1.600M1072 259l1.500 1.600l1.500-1.600" stroke="#fff" stroke-width="1" fill="none"/>
<path d="M974 282.500h91l5.900-7.300l6.300 7.300h189" fill="none" stroke="#c6c6c6" stroke-width="1"/>
<path d="M988 292.800v6.200h-6.400z" fill="#444"/><path d="M988.400 510.200v6.200h-6.400z" fill="#444"/>
<path d="M983.700 708v8l4.300-4z" fill="#e6e6e6" stroke="#555" stroke-width=".9"/><path d="M983.700 734v8l4.300-4z" fill="#e6e6e6" stroke="#555" stroke-width=".9"/>
<path d="M1234.600 318.5h5.400l-2.700-3.200zM1234.600 324.5h5.400l-2.700 3.200zM1234.600 345.5h5.400l-2.700-3.200zM1234.600 351.5h5.400l-2.700 3.200zM1234.600 372.5h5.400l-2.700-3.200zM1234.600 378.5h5.400l-2.700 3.200zM1234.600 399.5h5.400l-2.700-3.200zM1234.600 405.5h5.400l-2.700 3.200zM1234.600 426.5h5.400l-2.700-3.200zM1234.600 432.5h5.400l-2.700 3.200z" fill="#bdbdbd"/>
<path d="M998.500 628l2.500 2.800l4.800-6.300M998.500 653l2.500 2.800l4.800-6.300" fill="none" stroke="#a9a9a9" stroke-width="1.200"/>
<circle cx="1147.300" cy="651.700" r="4.800" fill="#fff" stroke="#5b8fd6" stroke-width="1"/><path d="M1147.300 650.800v3.500M1147.300 648.700v1.200" stroke="#3b6fc4" stroke-width="1.200"/>

</svg>
<div class="t" style="left:504.3px;top:11.0px;font-size:12px;color:#fff;letter-spacing:-0.20px;">ИСИТ 3 лр.xlsx - Excel (Сбой активации продукта)</div>
<div class="t" style="left:15.3px;top:40.0px;font-size:12.5px;color:#fff;letter-spacing:-0.56px;">Файл</div>
<div class="t" style="left:76.5px;top:40.0px;font-size:12.5px;color:#217346;letter-spacing:-0.65px;">Главная</div>
<div class="t" style="left:149.3px;top:40.0px;font-size:12.5px;color:#fff;letter-spacing:-0.71px;">Вставка</div>
<div class="t" style="left:220.0px;top:40.0px;font-size:12.5px;color:#fff;letter-spacing:-0.38px;">Разметка страницы</div>
<div class="t" style="left:356.0px;top:40.0px;font-size:12.5px;color:#fff;letter-spacing:-0.06px;">Формулы</div>
<div class="t" style="left:438.5px;top:40.0px;font-size:12.5px;color:#fff;letter-spacing:-0.20px;">Данные</div>
<div class="t" style="left:511.2px;top:40.0px;font-size:12.5px;color:#fff;letter-spacing:-0.40px;">Рецензирование</div>
<div class="t" style="left:631.2px;top:40.0px;font-size:12.5px;color:#fff;letter-spacing:-0.88px;">Вид</div>
<div class="t" style="left:697.5px;top:40.0px;font-size:12.5px;color:#e3efe8;letter-spacing:-0.58px;">Что вы хотите сделать?</div>
<div class="t" style="left:1045.8px;top:40.0px;font-size:12.5px;color:#fff;letter-spacing:-0.45px;">ysveta99@mail.ru</div>
<div class="t" style="left:1175.5px;top:40.0px;font-size:12.5px;color:#fff;letter-spacing:-0.31px;">Общий доступ</div>
<div class="t" style="left:7.0px;top:101.3px;font-size:12px;letter-spacing:-0.42px;">Вставить</div>
<div class="t" style="left:3.0px;top:137.0px;font-size:11px;color:#666;letter-spacing:0.15px;">Буфер обмена</div>
<div class="t" style="left:107.5px;top:75.0px;font-size:12px;color:#333;letter-spacing:-0.10px;">Calibri</div>
<div class="t" style="left:218.3px;top:75.0px;font-size:12px;color:#333;letter-spacing:-0.23px;">11</div>
<div class="t" style="left:109.0px;top:104.7px;font-size:12.5px;font-weight:700;color:#333;letter-spacing:0.69px;">Ж</div>
<div class="t" style="left:132.0px;top:104.7px;font-size:12.5px;font-weight:700;color:#333;font-style:italic;letter-spacing:0.81px;">К</div>
<div class="t" style="left:154.0px;top:104.7px;font-size:12.5px;font-weight:700;color:#333;letter-spacing:1.20px;">Ч</div>
<div class="t" style="left:175.8px;top:137.0px;font-size:11px;color:#666;letter-spacing:0.36px;">Шрифт</div>
<div class="t" style="left:264.1px;top:74.9px;font-size:13.4px;color:#555;letter-spacing:0.36px;">A</div>
<div class="t" style="left:287.1px;top:76.9px;font-size:11px;color:#555;letter-spacing:0.36px;">A</div>
<div class="t" style="left:274.7px;top:103.7px;font-size:13.3px;color:#555;letter-spacing:0.32px;">A</div>
<div class="t" style="left:341.0px;top:137.0px;font-size:11px;color:#666;letter-spacing:0.34px;">Выравнивание</div>
<div class="t" style="left:480.5px;top:74.6px;font-size:12px;color:#333;letter-spacing:0.16px;">Общий</div>
<div class="t" style="left:516.0px;top:103.6px;font-size:15px;letter-spacing:-0.34px;">%</div>
<div class="t" style="left:536.0px;top:106.3px;font-size:9.7px;letter-spacing:-0.32px;">000</div>
<div class="t" style="left:518.0px;top:137.0px;font-size:11px;color:#666;letter-spacing:-0.13px;">Число</div>
<div class="t" style="left:645.0px;top:101.0px;font-size:12px;">Условное</div>
<div class="t" style="left:619.5px;top:117.0px;font-size:12px;letter-spacing:-0.06px;">форматирование</div>
<div class="t" style="left:728.0px;top:101.0px;font-size:12px;letter-spacing:-0.04px;">Форматировать</div>
<div class="t" style="left:735.0px;top:117.0px;font-size:12px;letter-spacing:0.01px;">как таблицу</div>
<div class="t" style="left:823.0px;top:101.0px;font-size:12px;letter-spacing:-0.16px;">Стили</div>
<div class="t" style="left:820.0px;top:117.0px;font-size:12px;letter-spacing:-0.11px;">ячеек</div>
<div class="t" style="left:723.0px;top:137.0px;font-size:11px;color:#666;letter-spacing:0.06px;">Стили</div>
<div class="t" style="left:893.2px;top:67.0px;font-size:12px;letter-spacing:-0.45px;">Вставить</div>
<div class="t" style="left:893.2px;top:90.0px;font-size:12px;letter-spacing:-0.40px;">Удалить</div>
<div class="t" style="left:893.2px;top:113.0px;font-size:12px;letter-spacing:-0.06px;">Формат</div>
<div class="t" style="left:895.8px;top:137.0px;font-size:11px;color:#666;letter-spacing:0.47px;">Ячейки</div>
<div class="t" style="left:1007.5px;top:101.0px;font-size:12px;letter-spacing:-0.09px;">Сортировка</div>
<div class="t" style="left:1011.8px;top:117.0px;font-size:12px;letter-spacing:-0.24px;">и фильтр</div>
<div class="t" style="left:1086.2px;top:101.0px;font-size:12px;letter-spacing:-0.14px;">Найти и</div>
<div class="t" style="left:1078.8px;top:117.0px;font-size:12px;letter-spacing:-0.32px;">выделить</div>
<div class="t" style="left:1011.2px;top:137.0px;font-size:11px;color:#666;letter-spacing:0.23px;">Редактирование</div>
<div class="t" style="left:1024.3px;top:66.0px;font-size:15.3px;color:#2e75b6;letter-spacing:1.70px;">A</div>
<div class="t" style="left:1025.0px;top:79.8px;font-size:15.3px;color:#9b4fb8;letter-spacing:-0.86px;">Я</div>
<div class="t" style="left:12.5px;top:169.0px;font-size:12.5px;color:#333;letter-spacing:-0.50px;">K6</div>
<div class="t" style="left:224.0px;top:167.5px;font-size:13px;font-family:'Liberation Serif',serif;color:#666;font-style:italic;font-weight:700;">f</div>
<div class="t" style="left:228.3px;top:173.0px;font-size:9.5px;font-family:'Liberation Serif',serif;color:#666;font-style:italic;font-weight:700;">x</div>
<div class="t" style="left:79.5px;top:201.5px;font-size:12px;color:#262626;">A</div>
<div class="t" style="left:194.6px;top:201.5px;font-size:12px;color:#262626;">B</div>
<div class="t" style="left:305.7px;top:201.5px;font-size:12px;color:#262626;">C</div>
<div class="t" style="left:417.7px;top:201.5px;font-size:12px;color:#262626;">D</div>
<div class="t" style="left:508.5px;top:201.5px;font-size:12px;color:#262626;">E</div>
<div class="t" style="left:572.8px;top:201.5px;font-size:12px;color:#262626;">F</div>
<div class="t" style="left:635.8px;top:201.5px;font-size:12px;color:#262626;">G</div>
<div class="t" style="left:700.2px;top:201.5px;font-size:12px;color:#262626;">H</div>
<div class="t" style="left:766.8px;top:201.5px;font-size:12px;color:#262626;">I</div>
<div class="t" style="left:829.5px;top:201.5px;font-size:12px;color:#262626;">J</div>
<div class="t" style="left:892.5px;top:201.5px;font-size:12px;color:#217346;">K</div>
<div class="t" style="left:9.2px;top:223.3px;font-size:12.5px;color:#111;">1</div>
<div class="t" style="left:9.2px;top:322.7px;font-size:12.5px;color:#0000ff;">5</div>
<div class="t" style="left:9.2px;top:422.4px;font-size:12.5px;color:#0000ff;">6</div>
<div class="t" style="left:6.0px;top:442.6px;font-size:12.5px;color:#111;">22</div>
<div class="t" style="left:6.0px;top:462.6px;font-size:12.5px;color:#111;">23</div>
<div class="t" style="left:6.0px;top:482.6px;font-size:12.5px;color:#111;">24</div>
<div class="t" style="left:6.0px;top:502.6px;font-size:12.5px;color:#111;">25</div>
<div class="t" style="left:6.0px;top:522.6px;font-size:12.5px;color:#111;">26</div>
<div class="t" style="left:6.0px;top:542.6px;font-size:12.5px;color:#111;">27</div>
<div class="t" style="left:6.0px;top:562.6px;font-size:12.5px;color:#111;">28</div>
<div class="t" style="left:6.0px;top:582.6px;font-size:12.5px;color:#111;">29</div>
<div class="t" style="left:6.0px;top:602.6px;font-size:12.5px;color:#111;">30</div>
<div class="t" style="left:6.0px;top:622.6px;font-size:12.5px;color:#111;">31</div>
<div class="t" style="left:6.0px;top:642.6px;font-size:12.5px;color:#111;">32</div>
<div class="t" style="left:6.0px;top:662.6px;font-size:12.5px;color:#111;">33</div>
<div class="t" style="left:6.0px;top:682.6px;font-size:12.5px;color:#111;">34</div>
<div class="t" style="left:6.0px;top:702.6px;font-size:12.5px;color:#111;">35</div>
<div class="t" style="left:6.0px;top:722.6px;font-size:12.5px;color:#111;">36</div>
<div class="t" style="left:6.0px;top:742.6px;font-size:12.5px;color:#111;">37</div>
<div class="t" style="left:6.0px;top:762.6px;font-size:12.5px;color:#111;">38</div>
<div class="t" style="left:6.0px;top:782.6px;font-size:12.5px;color:#111;">39</div>
<div class="t" style="left:6.0px;top:802.6px;font-size:12.5px;color:#111;">40</div>
<div class="t" style="left:6.0px;top:822.6px;font-size:12.5px;color:#111;">41</div>
<div class="t" style="left:6.0px;top:842.6px;font-size:12.5px;color:#111;">42</div>
<div class="t" style="left:6.0px;top:862.6px;font-size:12.5px;color:#111;">43</div>
<div class="t" style="left:6.0px;top:882.6px;font-size:12.5px;color:#111;">44</div>
<div class="t" style="left:6.0px;top:902.6px;font-size:12.5px;color:#111;">45</div>
<div class="t" style="left:6.0px;top:922.6px;font-size:12.5px;color:#111;">46</div>
<div class="t" style="left:6.0px;top:942.6px;font-size:12.5px;color:#111;">47</div>
<div class="t" style="left:6.0px;top:962.6px;font-size:12.5px;color:#111;">48</div>
<div class="t" style="left:36.8px;top:220.4px;font-size:16px;font-weight:700;font-family:'Liberation Serif',serif;color:#000;width:87px;overflow:hidden;">Код стрижки</div>
<div class="t" style="left:164.5px;top:220.4px;font-size:16px;font-weight:700;font-family:'Liberation Serif',serif;color:#000;letter-spacing:-0.16px;">Название</div>
<div class="t" style="left:296.5px;top:220.4px;font-size:16px;font-weight:700;font-family:'Liberation Serif',serif;color:#000;letter-spacing:-0.41px;">Тип</div>
<div class="t" style="left:376.5px;top:220.4px;font-size:16px;font-weight:700;font-family:'Liberation Serif',serif;color:#000;width:87px;overflow:hidden;">Фотография</div>
<div class="t" style="left:494.0px;top:220.4px;font-size:16px;font-weight:700;font-family:'Liberation Serif',serif;color:#000;width:33px;overflow:hidden;">Цена</div>
<div class="t" style="left:28.1px;top:321.8px;font-size:14px;font-family:'Liberation Serif',serif;color:#000;letter-spacing:-0.15px;">0004</div>
<div class="t" style="left:28.1px;top:421.5px;font-size:14px;font-family:'Liberation Serif',serif;color:#000;letter-spacing:-0.15px;">0005</div>
<div class="t" style="left:144.0px;top:282.3px;font-size:14px;font-family:'Liberation Serif',serif;color:#000;letter-spacing:0.31px;">Пикси и сессон</div>
<div class="t" style="left:144.0px;top:382.3px;font-size:14px;font-family:'Liberation Serif',serif;color:#000;letter-spacing:0.39px;">Гарсон</div>
<div class="t" style="left:259.5px;top:282.3px;font-size:14px;font-family:'Liberation Serif',serif;color:#000;letter-spacing:0.41px;">Универсальная</div>
<div class="t" style="left:259.5px;top:382.3px;font-size:14px;font-family:'Liberation Serif',serif;color:#000;letter-spacing:0.41px;">Универсальная</div>
<div class="t" style="left:510.5px;top:282.3px;font-size:14px;font-family:'Liberation Serif',serif;color:#000;letter-spacing:-0.10px;">800р.</div>
<div class="t" style="left:499.5px;top:382.3px;font-size:14px;font-family:'Liberation Serif',serif;color:#000;">1 100р.</div>
<div class="t" style="left:115.0px;top:980.3px;font-size:12.5px;letter-spacing:-0.09px;">Клиенты</div>
<div class="t" style="left:193.0px;top:980.3px;font-size:12.5px;font-weight:700;color:#217346;letter-spacing:0.17px;">Стрижки</div>
<div class="t" style="left:273.0px;top:980.3px;font-size:12.5px;letter-spacing:-0.12px;">Лист2</div>
<div class="t" style="left:7.0px;top:1005.0px;font-size:12px;letter-spacing:-0.09px;">Готово</div>
<div class="t" style="left:61.5px;top:1004.0px;font-size:12px;letter-spacing:-0.34px;">Найдено записей: 2 из 20</div>
<div class="t" style="left:1245.8px;top:1005.0px;font-size:12px;letter-spacing:-1.18px;">100%</div>
<div class="t" style="left:974.0px;top:214.0px;font-size:20px;color:#217346;-webkit-text-stroke:0.35px #e6e6e6;letter-spacing:0.07px;">Формат фигуры</div>
<div class="t" style="left:996.3px;top:290.7px;font-size:12px;font-weight:700;color:#217346;letter-spacing:-0.25px;">Размер</div>
<div class="t" style="left:996.3px;top:315.3px;font-size:12px;color:#a6a6a6;letter-spacing:-0.32px;"><u>В</u>ысота</div>
<div class="t" style="left:996.3px;top:342.3px;font-size:12px;color:#a6a6a6;"><u>Ш</u>ирина</div>
<div class="t" style="left:996.3px;top:369.3px;font-size:12px;color:#a6a6a6;letter-spacing:0.10px;"><u>П</u>оворот</div>
<div class="t" style="left:996.3px;top:396.3px;font-size:12px;color:#a6a6a6;letter-spacing:-0.01px;"><u>М</u>асштаб высоты</div>
<div class="t" style="left:996.3px;top:423.3px;font-size:12px;color:#a6a6a6;letter-spacing:0.20px;">М<u>а</u>сштаб ширины</div>
<div class="t" style="left:1014.0px;top:448.6px;font-size:12px;color:#a6a6a6;letter-spacing:0.03px;">Со<u>х</u>ранить пропорции</div>
<div class="t" style="left:1014.0px;top:473.8px;font-size:12px;color:#a6a6a6;letter-spacing:-0.04px;"><u>О</u>тносительно исходного размера</div>
<div class="t" style="left:996.0px;top:507.6px;font-size:12px;font-weight:700;color:#217346;letter-spacing:-0.47px;">Свойства</div>
<div class="t" style="left:1014.0px;top:536.6px;font-size:12px;color:#a6a6a6;letter-spacing:-0.13px;">Перемещать и <u>и</u>зменять объект вместе с</div>
<div class="t" style="left:1014.0px;top:553.0px;font-size:12px;color:#a6a6a6;letter-spacing:0.09px;">ячейками</div>
<div class="t" style="left:1014.0px;top:575.0px;font-size:12px;color:#a6a6a6;letter-spacing:-0.09px;">П<u>е</u>ремещать, но не изменять размеры</div>
<div class="t" style="left:1014.0px;top:596.6px;font-size:12px;color:#a6a6a6;letter-spacing:-0.10px;"><u>Н</u>е перемещать и не изменять размеры</div>
<div class="t" style="left:1014.0px;top:622.0px;font-size:12px;color:#a6a6a6;letter-spacing:-0.15px;"><u>В</u>ыводить объект на печать</div>
<div class="t" style="left:1014.0px;top:647.0px;font-size:12px;color:#a6a6a6;letter-spacing:0.07px;">За<u>щ</u>ищаемый объект</div>
<div class="t" style="left:1014.0px;top:672.0px;font-size:12px;color:#a6a6a6;letter-spacing:-0.13px;">С<u>к</u>рыть текст</div>
<div class="t" style="left:996.0px;top:705.8px;font-size:12px;font-weight:700;letter-spacing:-0.28px;">Надпись</div>
<div class="t" style="left:996.0px;top:731.6px;font-size:12px;font-weight:700;letter-spacing:0.06px;">Замещающий текст</div>
</body></html>
